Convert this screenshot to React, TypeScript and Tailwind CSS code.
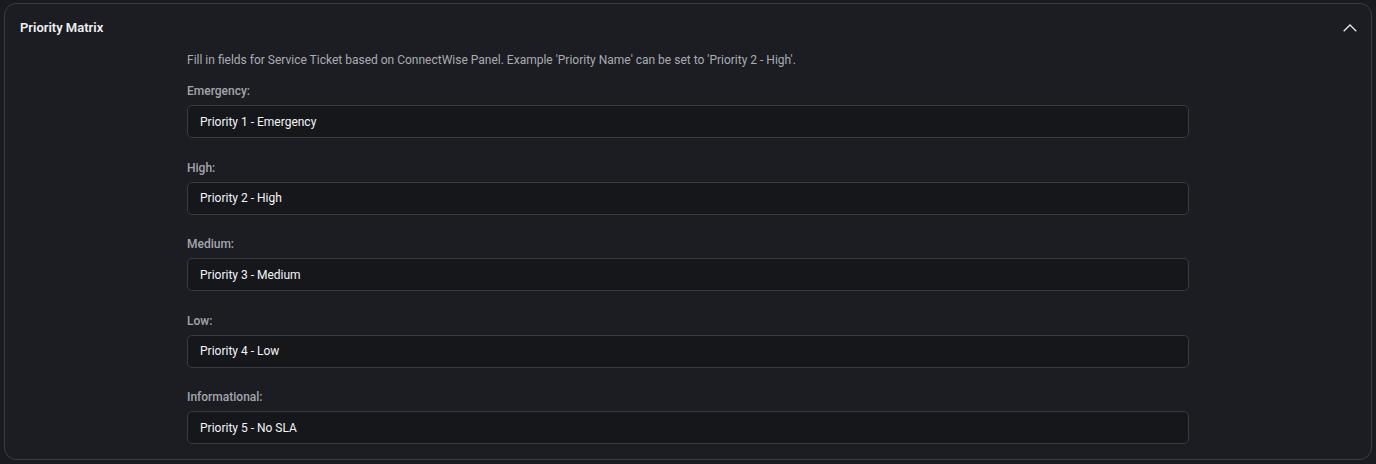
const fields = [
  { label: "Emergency:", value: "Priority 1 - Emergency" },
  { label: "High:", value: "Priority 2 - High" },
  { label: "Medium:", value: "Priority 3 - Medium" },
  { label: "Low:", value: "Priority 4 - Low" },
  { label: "Informational:", value: "Priority 5 - No SLA" },
];

export default function App() {
  return (
    <div
      className="min-h-[464px] bg-[#1a1b20] px-1 pb-1 pt-[3px]"
      style={{ fontFamily: "Roboto, 'Liberation Sans', sans-serif" }}
    >
      <section className="rounded-xl border border-[#3a3b42] bg-[#1c1d22]">
        <header className="flex h-[48px] items-center justify-between pl-[15px] pr-[14px]">
          <h2 className="text-[13px] font-semibold text-[#eef0f4]">Priority Matrix</h2>
          <svg width="14" height="8" viewBox="0 0 14 8" fill="none" className="text-[#e6e8ee]">
            <path d="M0.7 7.3 7 1l6.3 6.3" stroke="currentColor" strokeWidth="1.3" />
          </svg>
        </header>
        <div className="pb-[15px] pl-[182px]">
          <p className="text-[12px] leading-4 text-[#a9acb4]">
            Fill in fields for Service Ticket based on ConnectWise Panel. Example 'Priority Name' can be set to 'Priority 2 - High'.
          </p>
          <div className="mt-[15px] flex w-[1002px] flex-col gap-[21.5px]">
            {fields.map((f) => (
              <label key={f.label} className="flex flex-col">
                <span className="mb-[6px] text-[12px] font-medium leading-4 text-[#a3a6ae]">
                  {f.label}
                </span>
                <input
                  readOnly
                  value={f.value}
                  className="h-[33px] rounded-[5px] border border-[#3a3b42] bg-[#16171b] px-3 text-[12px] text-[#f4f5f7] outline-none"
                />
              </label>
            ))}
          </div>
        </div>
      </section>
    </div>
  );
}
